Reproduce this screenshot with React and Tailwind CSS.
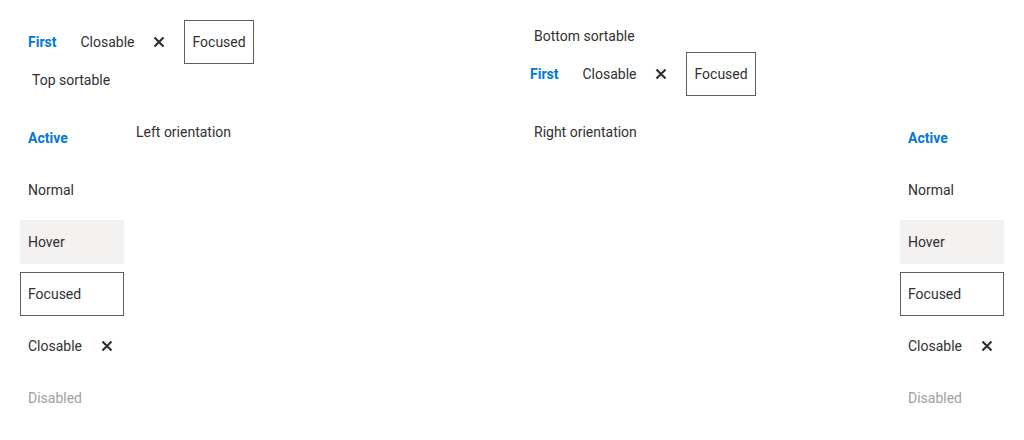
function CloseIcon() {
  return (
    <span className="flex h-4 w-4 items-center justify-center">
      <svg width="12" height="12" viewBox="0 0 12 12" fill="none">
        <path d="M1.5 1.5L10.5 10.5M10.5 1.5L1.5 10.5" stroke="#323130" strokeWidth="2.2" />
      </svg>
    </span>
  );
}

function Tab({ kind, children }) {
  const base = "flex h-11 items-center px-2 text-sm box-border";
  const styles = {
    active: "font-bold text-[#0078d4]",
    normal: "text-[#323130]",
    hover: "bg-[#f3f2f1] text-[#323130]",
    focused: "border border-[#605e5c] px-[7px] text-[#323130]",
    disabled: "text-[#a19f9d]",
    closable: "gap-[17px] pr-[9px] text-[#323130]",
  };
  return (
    <div className={`${base} ${styles[kind]}`}>
      {children}
      {kind === "closable" && <CloseIcon />}
    </div>
  );
}

function HorizontalTabs() {
  return (
    <div className="flex flex-row gap-2">
      <Tab kind="active">First</Tab>
      <Tab kind="closable">Closable</Tab>
      <Tab kind="focused">Focused</Tab>
    </div>
  );
}

function VerticalTabs() {
  return (
    <div className="flex w-[104px] shrink-0 flex-col gap-2">
      <Tab kind="active">Active</Tab>
      <Tab kind="normal">Normal</Tab>
      <Tab kind="hover">Hover</Tab>
      <Tab kind="focused">Focused</Tab>
      <div className="flex h-11 items-center justify-between pl-2 pr-[9px] text-sm text-[#323130]">
        Closable
        <CloseIcon />
      </div>
      <Tab kind="disabled">Disabled</Tab>
    </div>
  );
}

function Panel({ children, className = "" }) {
  return (
    <div className={`px-3 py-1.5 text-sm leading-5 text-[#323130] ${className}`}>
      {children}
    </div>
  );
}

export default function App() {
  return (
    <div
      className="grid h-[440px] w-[1024px] grid-cols-2 content-start gap-5 bg-white p-5"
      style={{ fontFamily: "Roboto, 'Liberation Sans', sans-serif" }}
    >
      {/* Top sortable */}
      <div className="flex flex-col">
        <HorizontalTabs />
        <Panel>Top sortable</Panel>
      </div>

      {/* Bottom sortable */}
      <div className="flex flex-col">
        <Panel>Bottom sortable</Panel>
        <HorizontalTabs />
      </div>

      {/* Left orientation */}
      <div className="flex flex-row">
        <VerticalTabs />
        <Panel className="flex-1">Left orientation</Panel>
      </div>

      {/* Right orientation */}
      <div className="flex flex-row">
        <Panel className="flex-1">Right orientation</Panel>
        <VerticalTabs />
      </div>
    </div>
  );
}
